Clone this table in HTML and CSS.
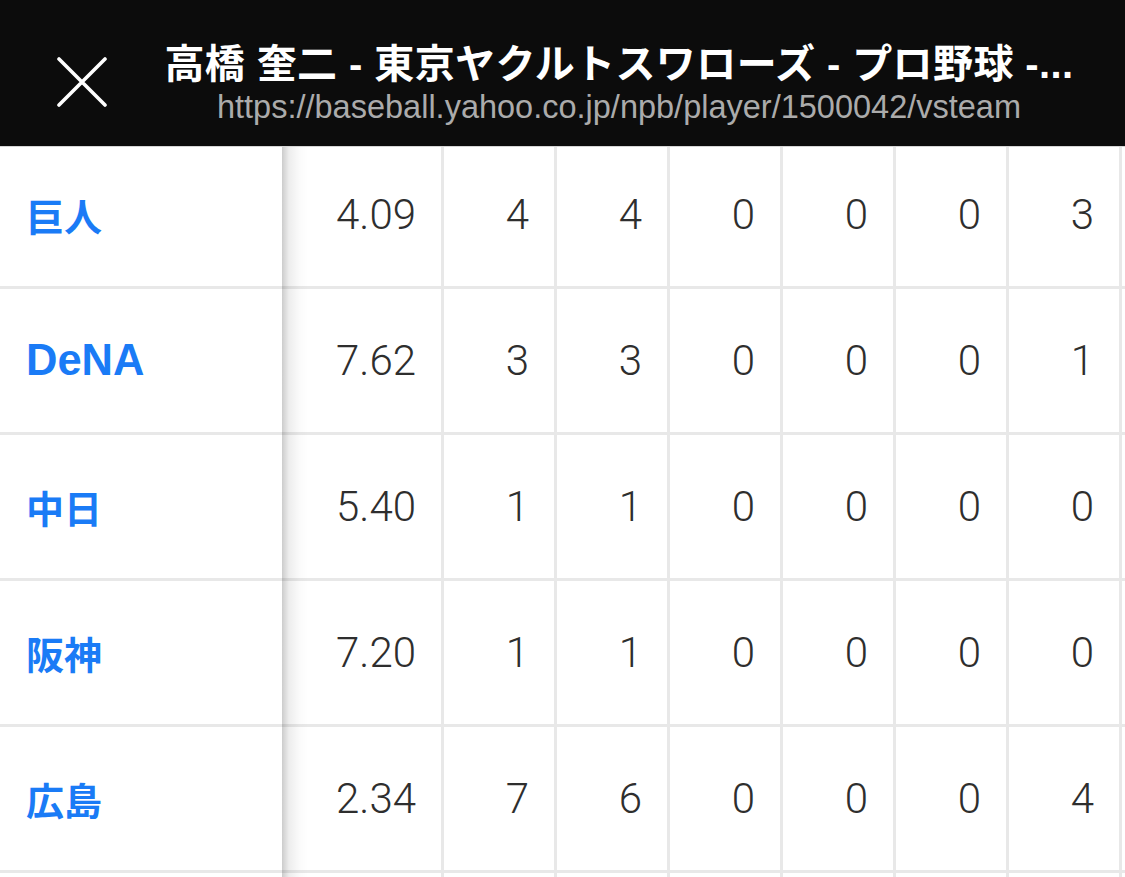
FILE: index.html
```html
<!DOCTYPE html>
<html lang="ja">
<head>
<meta charset="utf-8">
<title>高橋 奎二 - 東京ヤクルトスワローズ - プロ野球</title>
<link rel="stylesheet" href="styles.css">
</head>
<body>
<header class="bar">
  <div class="close">
    <svg width="50" height="50" viewBox="0 0 50 50" aria-label="閉じる">
      <path d="M2 2 L48 48 M48 2 L2 48" stroke="#fff" stroke-width="3.6" stroke-linecap="round" fill="none"/>
    </svg>
  </div>
  <div class="titles">
    <div class="title">高橋 奎二 - 東京ヤクルトスワローズ - プロ野球 -...</div>
    <div class="url">https://baseball.yahoo.co.jp/npb/player/1500042/vsteam</div>
  </div>
</header>
<main class="scroller">
  <div class="table">
    <div class="row">
      <div class="team ja">巨人</div><div class="num">4.09</div><div class="num">4</div><div class="num">4</div><div class="num">0</div><div class="num">0</div><div class="num">0</div><div class="num">3</div><div class="num"></div>
    </div>
    <div class="row">
      <div class="team">DeNA</div><div class="num">7.62</div><div class="num">3</div><div class="num">3</div><div class="num">0</div><div class="num">0</div><div class="num">0</div><div class="num">1</div><div class="num"></div>
    </div>
    <div class="row">
      <div class="team ja">中日</div><div class="num">5.40</div><div class="num">1</div><div class="num">1</div><div class="num">0</div><div class="num">0</div><div class="num">0</div><div class="num">0</div><div class="num"></div>
    </div>
    <div class="row">
      <div class="team ja">阪神</div><div class="num">7.20</div><div class="num">1</div><div class="num">1</div><div class="num">0</div><div class="num">0</div><div class="num">0</div><div class="num">0</div><div class="num"></div>
    </div>
    <div class="row">
      <div class="team ja">広島</div><div class="num">2.34</div><div class="num">7</div><div class="num">6</div><div class="num">0</div><div class="num">0</div><div class="num">0</div><div class="num">4</div><div class="num"></div>
    </div>
    <div class="row">
      <div class="team"></div><div class="num"></div><div class="num"></div><div class="num"></div><div class="num"></div><div class="num"></div><div class="num"></div><div class="num"></div><div class="num"></div>
    </div>
  </div>
</main>
</body>
</html>
```
FILE: styles.css
```css
html, body {
  margin: 0;
  padding: 0;
  background: #ffffff;
}
body {
  width: 1125px;
  height: 877px;
  overflow: hidden;
  font-family: "Liberation Sans", "Noto Sans CJK JP", sans-serif;
}
.bar {
  height: 146px;
  background: #0c0c0c;
  border-bottom: 1px solid #d6d6d6;
  display: flex;
  align-items: flex-start;
}
.close {
  flex: none;
  width: 113px;
  box-sizing: border-box;
  padding-left: 57px;
  padding-top: 57px;
}
.close svg {
  display: block;
}
.titles {
  flex: 1;
  min-width: 0;
  text-align: center;
  padding-top: 39px;
}
.title {
  color: #ffffff;
  font-family: "Liberation Sans", "Noto Sans CJK JP", sans-serif;
  font-weight: 700;
  font-size: 40px;
  line-height: 50px;
  letter-spacing: 0.4px;
  white-space: nowrap;
}
.url {
  color: #ababab;
  font-family: "Liberation Sans", sans-serif;
  font-size: 32.5px;
  line-height: 36px;
  white-space: nowrap;
}
.scroller {
  height: 730px;
  overflow: hidden;
}
.table {
  margin-top: -4px;
}
.row {
  display: grid;
  grid-template-columns: 282px 162px repeat(7, 113px);
  height: 146px;
}
.row > div {
  box-sizing: border-box;
  border-bottom: 3px solid #e8e8e8;
  display: flex;
  align-items: center;
}
.team {
  position: relative;
  z-index: 1;
  padding-left: 26px;
  color: #1a7bf6;
  font-family: "Liberation Sans", "Noto Sans CJK JP", sans-serif;
  font-weight: 700;
  font-size: 43.5px;
  background: #ffffff;
}
.team.ja {
  font-family: "Noto Sans CJK JP", sans-serif;
  font-size: 38px;
}
.team::after {
  content: "";
  position: absolute;
  left: 100%;
  top: 0;
  bottom: -3px;
  width: 26px;
  background: linear-gradient(to right, rgba(0,0,0,0.2), rgba(0,0,0,0.07) 7px, rgba(0,0,0,0.015) 18px, rgba(0,0,0,0));
  pointer-events: none;
}
.num {
  justify-content: flex-end;
  padding-right: 25px;
  border-right: 3px solid #e8e8e8;
  color: #2e2e2e;
  font-family: "Roboto", "Liberation Sans", sans-serif;
  font-weight: 300;
  font-size: 42px;
}
```
